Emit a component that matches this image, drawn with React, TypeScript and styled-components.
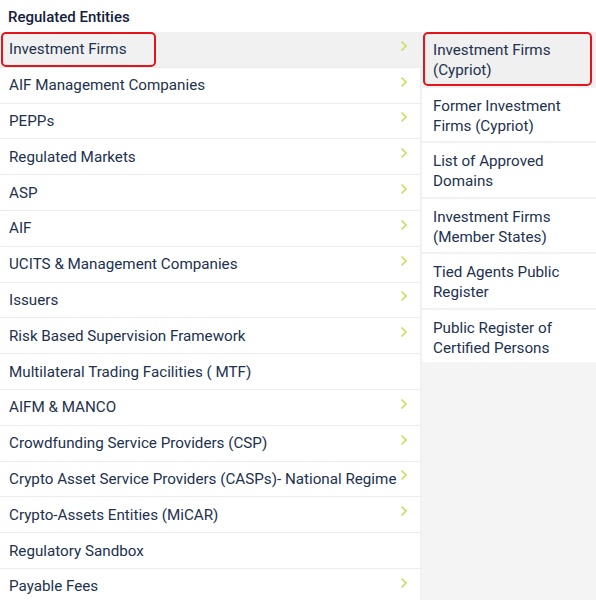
import styled, { createGlobalStyle } from "styled-components";

const GlobalStyle = createGlobalStyle`
  body {
    margin: 0;
    background: #ffffff;
    font-family: Roboto, "Liberation Sans", Arial, sans-serif;
    color: #22314d;
  }
`;

type Entity = { label: string; sub: boolean };

const entities: Entity[] = [
  { label: "Investment Firms", sub: true },
  { label: "AIF Management Companies", sub: true },
  { label: "PEPPs", sub: true },
  { label: "Regulated Markets", sub: true },
  { label: "ASP", sub: true },
  { label: "AIF", sub: true },
  { label: "UCITS & Management Companies", sub: true },
  { label: "Issuers", sub: true },
  { label: "Risk Based Supervision Framework", sub: true },
  { label: "Multilateral Trading Facilities ( MTF)", sub: false },
  { label: "AIFM & MANCO", sub: true },
  { label: "Crowdfunding Service Providers (CSP)", sub: true },
  { label: "Crypto Asset Service Providers (CASPs)- National Regime", sub: true },
  { label: "Crypto-Assets Entities (MiCAR)", sub: true },
  { label: "Regulatory Sandbox", sub: false },
  { label: "Payable Fees", sub: true },
];

const subItems = [
  ["Investment Firms", "(Cypriot)"],
  ["Former Investment", "Firms (Cypriot)"],
  ["List of Approved", "Domains"],
  ["Investment Firms", "(Member States)"],
  ["Tied Agents Public", "Register"],
  ["Public Register of", "Certified Persons"],
];

const Chevron = () => (
  <svg width="8" height="12" viewBox="0 0 8 12">
    <path d="M1.5 1.5 L6 6 L1.5 10.5" fill="none" stroke="#c9dc5c" strokeWidth="1.6" />
  </svg>
);

const App = () => {
  return (
    <>
      <GlobalStyle />
      <Page>
        <Heading>Regulated Entities</Heading>
        <Menu>
          <List>
            {entities.map((e, i) => (
              <Row key={e.label} $active={i === 0}>
                <RowLabel>{e.label}</RowLabel>
                {e.sub && (
                  <Arrow>
                    <Chevron />
                  </Arrow>
                )}
                {i === 0 && <Marker $right={264} />}
              </Row>
            ))}
          </List>
          <SubPanel>
            {subItems.map((lines, i) => (
              <SubItem key={i} $active={i === 0}>
                {lines[0]}
                <br />
                {lines[1]}
                {i === 0 && <Marker $right={4} />}
              </SubItem>
            ))}
          </SubPanel>
        </Menu>
      </Page>
    </>
  );
};

export default App;

const Page = styled.div`
  width: 596px;
  height: 600px;
  overflow: hidden;
`;

const Heading = styled.div`
  height: 32px;
  box-sizing: border-box;
  padding: 8px 0 0 8px;
  font-size: 15px;
  font-weight: 500;
  color: #13203a;
`;

const Menu = styled.div`
  display: grid;
  grid-template-columns: 422px 1fr;
`;

const List = styled.div`
  display: flex;
  flex-direction: column;
  border-right: 2px solid #f1f1f1;
`;

const Row = styled.div<{ $active: boolean }>`
  position: relative;
  height: 35.8px;
  box-sizing: border-box;
  border-bottom: 1px solid #ececec;
  display: flex;
  align-items: center;
  padding: 0 12px 0 9px;
  background: ${(p) => (p.$active ? "#f1f1f1" : "#ffffff")};
`;

const RowLabel = styled.span`
  flex: 1;
  font-size: 15.2px;
  white-space: nowrap;
`;

const Arrow = styled.span`
  display: flex;
  flex-shrink: 0;
  margin-top: -7px;
`;

const SubPanel = styled.div`
  background: #f4f4f4;
  display: flex;
  flex-direction: column;
  align-self: stretch;
`;

const SubItem = styled.div<{ $active: boolean }>`
  position: relative;
  height: 55.5px;
  box-sizing: border-box;
  padding: 8px 10px 0 11px;
  border-bottom: 2px solid #f1f1f1;
  font-size: 15.2px;
  line-height: 20px;
  background: ${(p) => (p.$active ? "#f0f0f0" : "#ffffff")};

  &:last-child {
    height: 52px;
    border-bottom: none;
  }
`;

const Marker = styled.span<{ $right: number }>`
  position: absolute;
  left: 1px;
  top: 0;
  bottom: 0;
  right: ${(p) => p.$right}px;
  border: 2px solid #e4141b;
  border-radius: 5px;
  pointer-events: none;
`;
